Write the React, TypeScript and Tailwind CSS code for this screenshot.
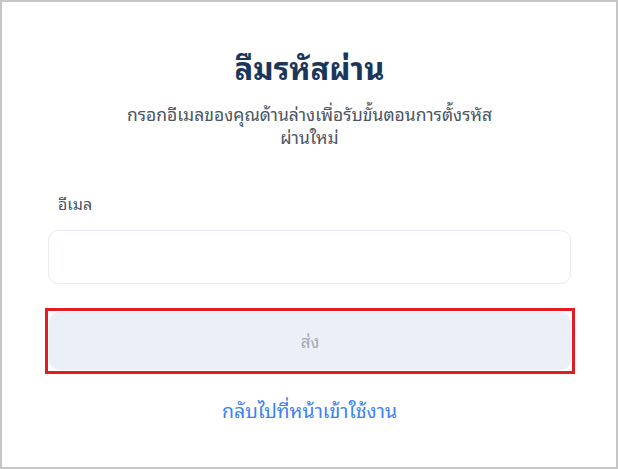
import React from "react";

export default function App() {
  return (
    <div
      className="w-[618px] h-[469px] border-2 border-[#c6c6c6] bg-white flex flex-col items-center pl-[46px] pr-[45px] pt-[42px]"
      style={{ fontFamily: 'Tahoma, "Leelawadee UI", "Noto Sans Thai Looped", "Noto Sans Thai UI", "Noto Sans Thai", Loma, Garuda, "Noto Sans", sans-serif' }}
    >
      <h1 className="text-[31px] leading-[44px] font-bold text-[#1b365d]">ลืมรหัสผ่าน</h1>
      <p className="mt-[14px] w-[390px] text-center text-[17.5px] leading-[23px] text-[#4b5563]">
        กรอกอีเมลของคุณด้านล่างเพื่อรับขั้นตอนการตั้งรหัสผ่านใหม่
      </p>
      <div className="w-full mt-[44px] flex flex-col">
        <label className="pl-[10px] text-[16px] leading-[22px] text-[#4b5563]">อีเมล</label>
        <input
          type="email"
          className="mt-[16px] h-[54px] w-full rounded-[10px] border border-[#e6ebf4] bg-white outline-none"
        />
        <div className="mt-[24px] -ml-[3px] -mr-[4px] border-[3px] border-[#e31b23] p-px">
          <button
            type="button"
            className="block h-[58px] w-full rounded-[10px] bg-[#ebeff7] text-[17px] text-[#a3a8b2]"
          >
            ส่ง
          </button>
        </div>
      </div>
      <a href="#" className="mt-[22px] text-[19.5px] leading-[28px] text-[#3b82f6]">
        กลับไปที่หน้าเข้าใช้งาน
      </a>
    </div>
  );
}
